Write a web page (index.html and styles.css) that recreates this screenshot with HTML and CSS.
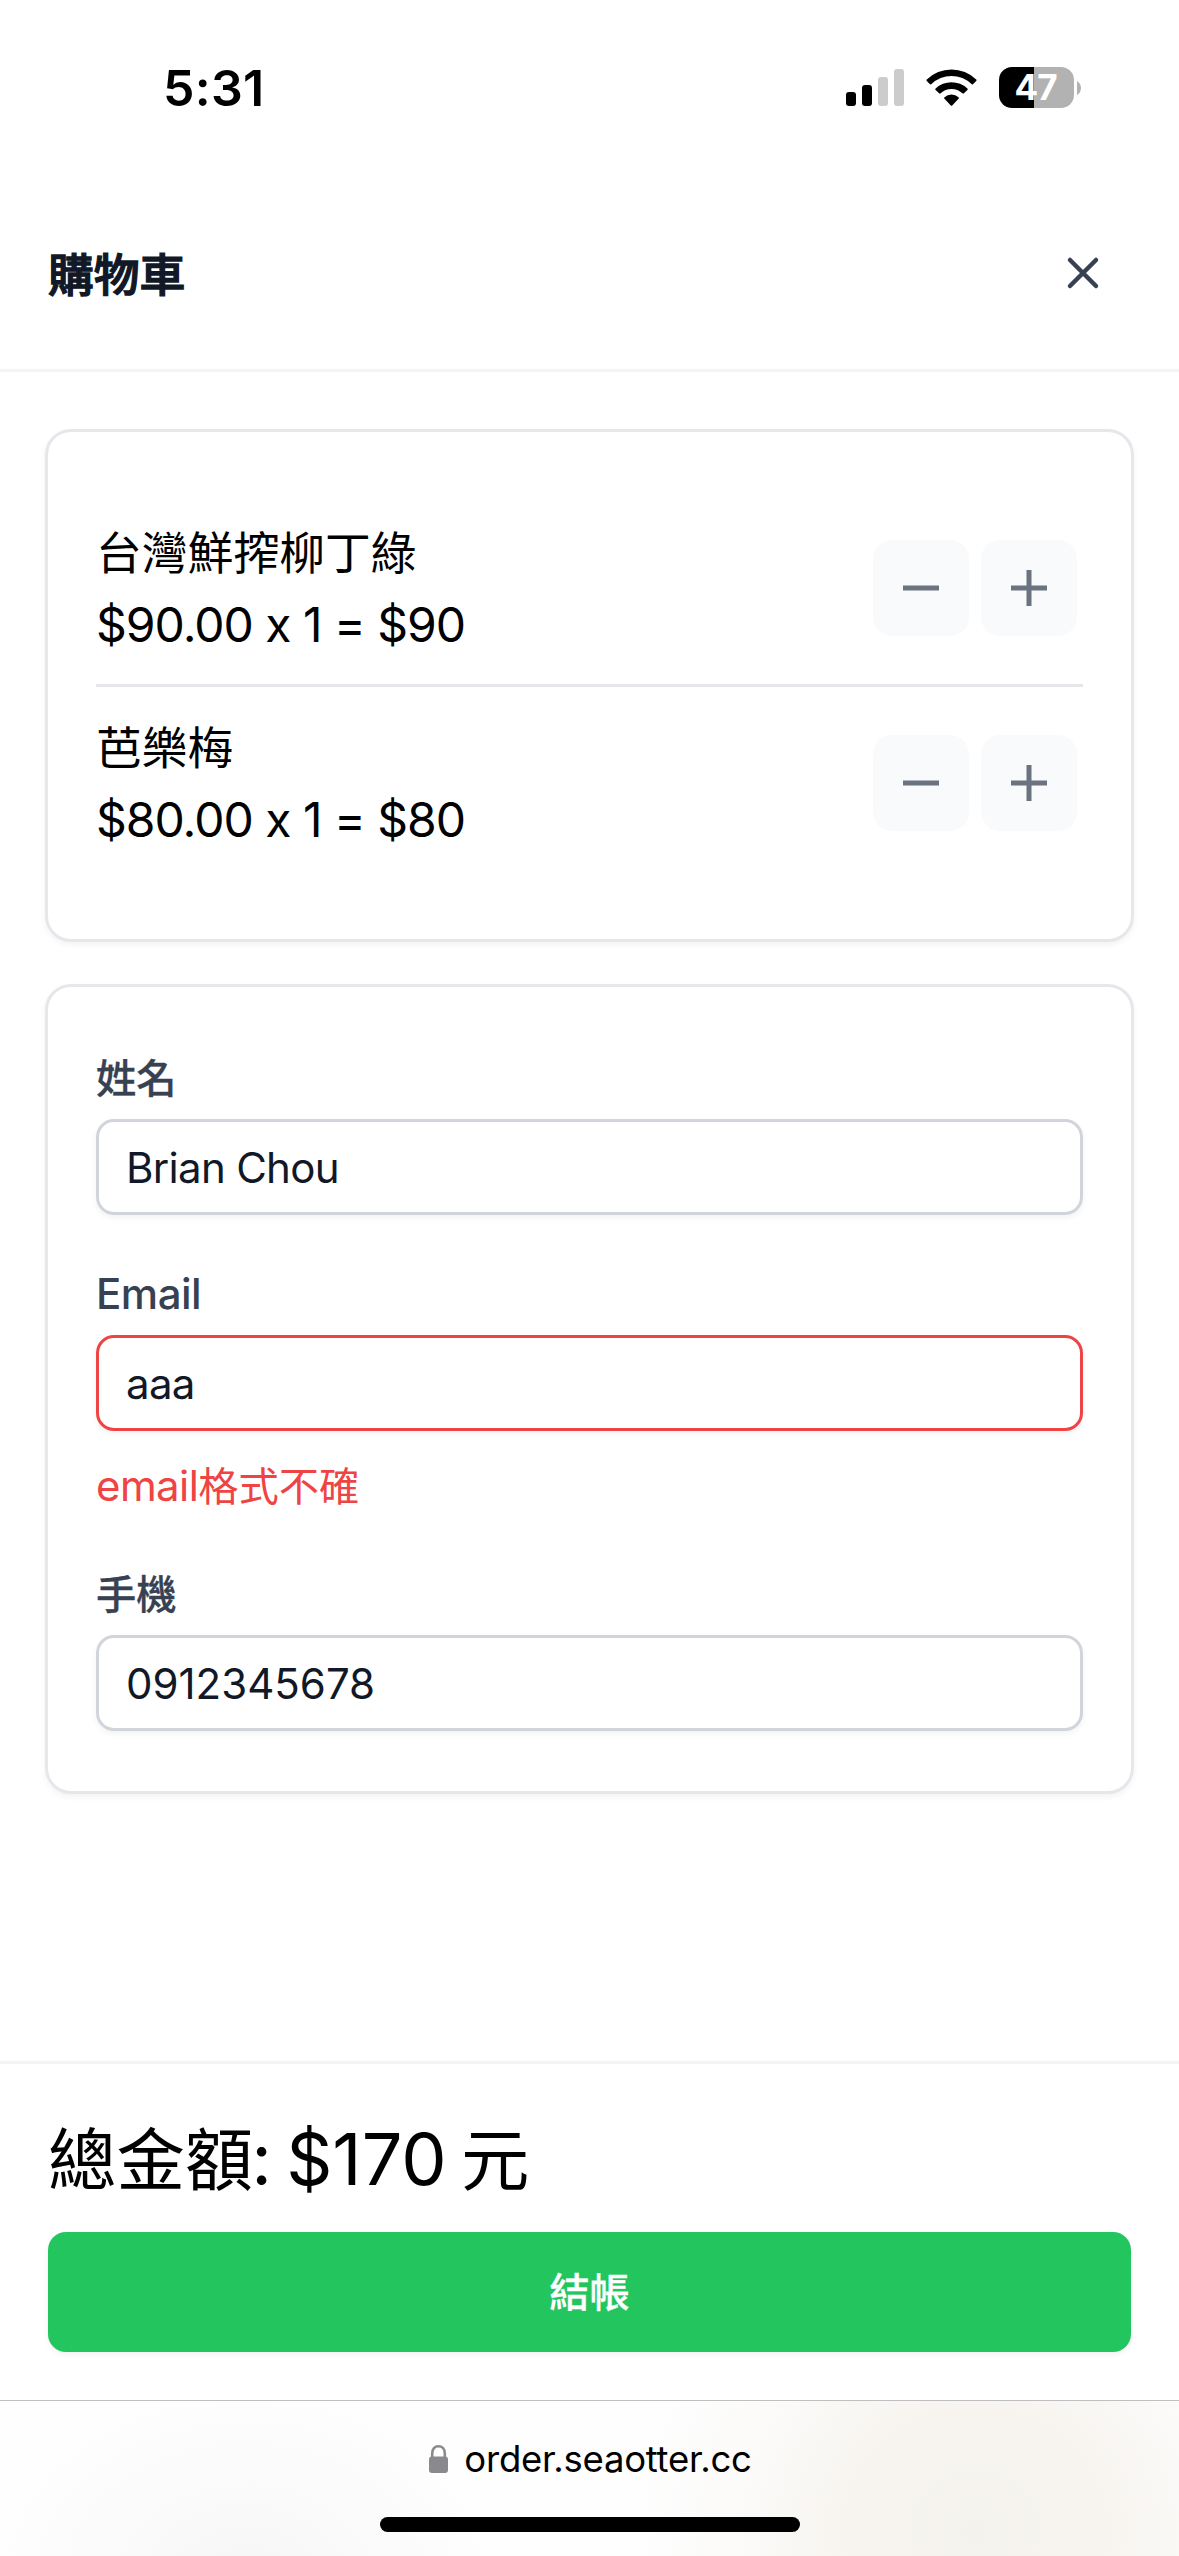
FILE: index.html
```html
<!DOCTYPE html>
<html lang="zh-Hant">
<head>
<meta charset="utf-8">
<title>購物車</title>
<link rel="stylesheet" href="styles.css">
</head>
<body>
<div class="screen">
  <div class="status-bar">
    <span class="time">5:31</span>
    <div class="indicators">
      <svg class="signal" width="58" height="37" viewBox="0 0 58 37">
        <rect x="0" y="23" width="10" height="14" rx="3"/>
        <rect x="16" y="16" width="10" height="21" rx="3"/>
        <rect class="dim" x="32" y="8" width="10" height="29" rx="3"/>
        <rect class="dim" x="48" y="0" width="10" height="37" rx="3"/>
      </svg>
      <svg class="wifi" width="51" height="37" viewBox="0 0 51 37">
        <path d="M.8 10.6A35 35 0 0 1 50.2 10.6Q51 11.3 50.2 12L47 15.2Q46.3 15.8 45.5 15.1A28.5 28.5 0 0 0 5.5 15.1Q4.7 15.8 4 15.2L.8 12Q0 11.3 .8 10.6Z"/>
        <path d="M9.6 19.6A23 23 0 0 1 41.4 19.6Q42.2 20.3 41.4 21L37.9 24.3Q37.2 25 36.4 24.3A16 16 0 0 0 14.6 24.3Q13.8 25 13.1 24.3L9.6 21Q8.8 20.3 9.6 19.6Z"/>
        <path d="M18.5 28.2A10.5 10.5 0 0 1 32.5 28.2Q33.3 29 32.5 29.8L26.2 36.5Q25.5 37.2 24.8 36.5L18.5 29.8Q17.7 29 18.5 28.2Z"/>
      </svg>
      <div class="battery">
        <div class="battery-body">47</div>
        <svg width="4" height="14" viewBox="0 0 4 14"><path d="M0 0Q4 2.5 4 7T0 14Z"/></svg>
      </div>
    </div>
  </div>

  <header class="cart-header">
    <h1>購物車</h1>
    <button class="close" aria-label="關閉">
      <svg width="36" height="36" viewBox="0 0 36 36"><path d="M5 5L31 31M31 5L5 31"/></svg>
    </button>
  </header>

  <main class="cart-body">
    <section class="card items">
      <div class="item">
        <div class="item-text">
          <div><span class="han">台灣鮮搾柳丁綠</span></div>
          <div class="price">$90.00 x 1 = $90</div>
        </div>
        <div class="stepper">
          <button aria-label="減少"><svg width="36" height="36" viewBox="0 0 36 36"><path d="M0 18H36"/></svg></button>
          <button aria-label="增加"><svg width="36" height="36" viewBox="0 0 36 36"><path d="M0 18H36M18 0V36"/></svg></button>
        </div>
      </div>
      <div class="item">
        <div class="item-text">
          <div><span class="han">芭樂梅</span></div>
          <div class="price">$80.00 x 1 = $80</div>
        </div>
        <div class="stepper">
          <button aria-label="減少"><svg width="36" height="36" viewBox="0 0 36 36"><path d="M0 18H36"/></svg></button>
          <button aria-label="增加"><svg width="36" height="36" viewBox="0 0 36 36"><path d="M0 18H36M18 0V36"/></svg></button>
        </div>
      </div>
    </section>

    <section class="card form">
      <div class="field">
        <label for="name"><span class="han">姓名</span></label>
        <input id="name" type="text" value="Brian Chou">
      </div>
      <div class="field">
        <label for="email">Email</label>
        <input id="email" class="invalid" type="text" value="aaa">
        <p class="error">email<span class="han">格式不確</span></p>
      </div>
      <div class="field">
        <label for="phone"><span class="han">手機</span></label>
        <input id="phone" class="digits" type="text" value="0912345678">
      </div>
    </section>
  </main>

  <footer class="cart-footer">
    <p class="total"><span class="han">總金額</span><span class="amount">: $170</span> <span class="han">元</span></p>
    <button class="checkout"><span class="han">結帳</span></button>
  </footer>

  <div class="browser-bar">
    <div class="address">
      <svg width="19" height="28" viewBox="0 0 19 28"><rect x="0" y="11.500" width="19" height="16.500" rx="3"/><path d="M3.200 13V8.500C3.200 4 5.800 1.300 9.500 1.300S15.800 4 15.800 8.500V13"/></svg>
      <span class="url">order.seaotter.cc</span>
    </div>
    <div class="home-indicator"></div>
  </div>
</div>
</body>
</html>
```
FILE: styles.css
```css
* {
  box-sizing: border-box;
}

body {
  margin: 0;
  background: #fff;
  color: #000;
  font-family: Inter, "Noto Sans CJK TC", sans-serif;
}

button,
input {
  margin: 0;
  border: 0;
  background: none;
  font: inherit;
}

h1,
p {
  margin: 0;
}

svg {
  display: block;
}

.screen {
  display: flex;
  flex-direction: column;
  width: 1179px;
  height: 2556px;
  overflow: hidden;
}

.han {
  letter-spacing: 0;
  line-height: 1;
}

/* Status bar */
.status-bar {
  display: flex;
  justify-content: space-between;
  height: 177px;
  padding: 67px 98px 0 163px;
}

.time {
  height: 42px;
  font-size: 50px;
  font-weight: 600;
  letter-spacing: 0.300px;
  line-height: 43px;
}

.indicators {
  display: flex;
  align-items: center;
  height: 41px;
}

.signal .dim {
  fill: #ccc;
}

.wifi {
  margin-left: 22px;
}

.battery {
  display: flex;
  align-items: center;
  gap: 3px;
  margin-left: 22px;
}

.battery-body {
  width: 75px;
  height: 41px;
  padding-right: 2px;
  border-radius: 13px;
  background: linear-gradient(90deg, #000 35px, #b2b2b2 35px);
  color: #fff;
  font-size: 35px;
  font-weight: 700;
  letter-spacing: -1px;
  line-height: 41px;
  text-align: center;
}

.battery svg {
  fill: #b2b2b2;
}

/* Header */
.cart-header {
  display: flex;
  align-items: center;
  justify-content: space-between;
  height: 195px;
  padding: 0 78px 0 48px;
  border-bottom: 3px solid #f3f4f6;
}

.cart-header h1 {
  padding-top: 6px;
  color: #111827;
  font-size: 45.800px;
  font-weight: 500;
  line-height: 72px;
  -webkit-text-stroke: 1.300px currentColor;
}

.close {
  padding: 0;
}

.close svg {
  fill: none;
  stroke: #374151;
  stroke-width: 4.500;
  stroke-linecap: round;
}

/* Cards */
.cart-body {
  display: flex;
  flex: 1;
  flex-direction: column;
  gap: 42px;
  padding: 57px 45px 0;
}

.card {
  border: 3px solid #e5e7eb;
  border-radius: 26px;
  box-shadow: 0 3px 6px rgba(0, 0, 0, 0.05);
}

.items {
  padding: 60px 48px;
}

.item {
  display: flex;
  align-items: center;
  justify-content: space-between;
  padding: 24px 6px 24px 0;
}

.item + .item {
  border-top: 3px solid #e5e7eb;
}

.item-text {
  font-size: 48px;
  line-height: 74px;
}

.item-text > div {
  height: 72px;
}

.item-text .han {
  font-size: 45.800px;
}

.price {
  letter-spacing: -1px;
  font-feature-settings: "calt" 0;
}

.stepper {
  display: flex;
  gap: 12px;
}

.stepper button {
  display: grid;
  place-items: center;
  width: 96px;
  height: 96px;
  border-radius: 19px;
  background: #f9fafb;
}

.stepper svg {
  stroke: #6b7280;
  stroke-width: 5;
}

/* Form */
.form {
  display: flex;
  flex-direction: column;
  gap: 48px;
  padding: 60px 48px;
}

.field {
  font-size: 42px;
  letter-spacing: -0.600px;
  line-height: 60px;
}

.field .han,
.checkout .han {
  font-size: 40.300px;
}

.field label {
  display: block;
  height: 60px;
  margin-bottom: 12px;
  color: #374151;
  font-weight: 500;
  letter-spacing: -0.500px;
  line-height: 61px;
}

.field label .han,
.checkout .han {
  -webkit-text-stroke: 0.300px currentColor;
}

.field input {
  display: block;
  width: 100%;
  height: 96px;
  padding: 0 27px;
  border: 3px solid #d1d5db;
  border-radius: 18px;
  box-shadow: 0 3px 6px rgba(0, 0, 0, 0.05);
  color: #111827;
  letter-spacing: -0.700px;
}

.field input.digits {
  letter-spacing: 0;
}

.field input.invalid {
  border-color: #ef4444;
}

.error {
  height: 60px;
  margin-top: 24px;
  color: #ef4444;
  line-height: 61px;
}

/* Footer */
.cart-footer {
  height: 339px;
  padding: 48px 48px 0;
  border-top: 3px solid #f3f4f6;
}

.total {
  height: 96px;
  margin-bottom: 24px;
  font-size: 72px;
  line-height: 94px;
  word-spacing: -6px;
  font-feature-settings: "calt" 0;
}

.total .han {
  font-size: 68.400px;
}

.amount {
  margin-left: -2px;
}

.checkout {
  display: block;
  width: 100%;
  height: 120px;
  padding: 2px 0 0;
  border-radius: 18px;
  background: #22c55e;
  box-shadow: 0 3px 6px rgba(0, 0, 0, 0.05);
  color: #fff;
  font-weight: 500;
}

/* Browser chrome */
.browser-bar {
  display: flex;
  flex-direction: column;
  align-items: center;
  height: 156px;
  padding-top: 33px;
  border-top: 1px solid #bfbfbf;
  background:
    radial-gradient(ellipse 340px 320px at 975px 130px, #f4f2ed 0, #f7f4ef 35%, rgba(250, 248, 246, 0.600) 70%, rgba(255, 255, 255, 0) 100%),
    radial-gradient(ellipse 250px 190px at 245px 180px, #f6f6f6, rgba(255, 255, 255, 0)),
    #fefefe;
}

.address {
  display: flex;
  align-items: center;
  gap: 16px;
  height: 50px;
  padding-left: 2px;
}

.address svg {
  fill: #8a8a8e;
}

.address path {
  fill: none;
  stroke: #8a8a8e;
  stroke-width: 2.600;
}

.url {
  font-size: 36.500px;
  letter-spacing: -0.250px;
  line-height: 50px;
}

.home-indicator {
  width: 420px;
  height: 15px;
  margin-top: 33px;
  border-radius: 8px;
  background: #000;
}
```
